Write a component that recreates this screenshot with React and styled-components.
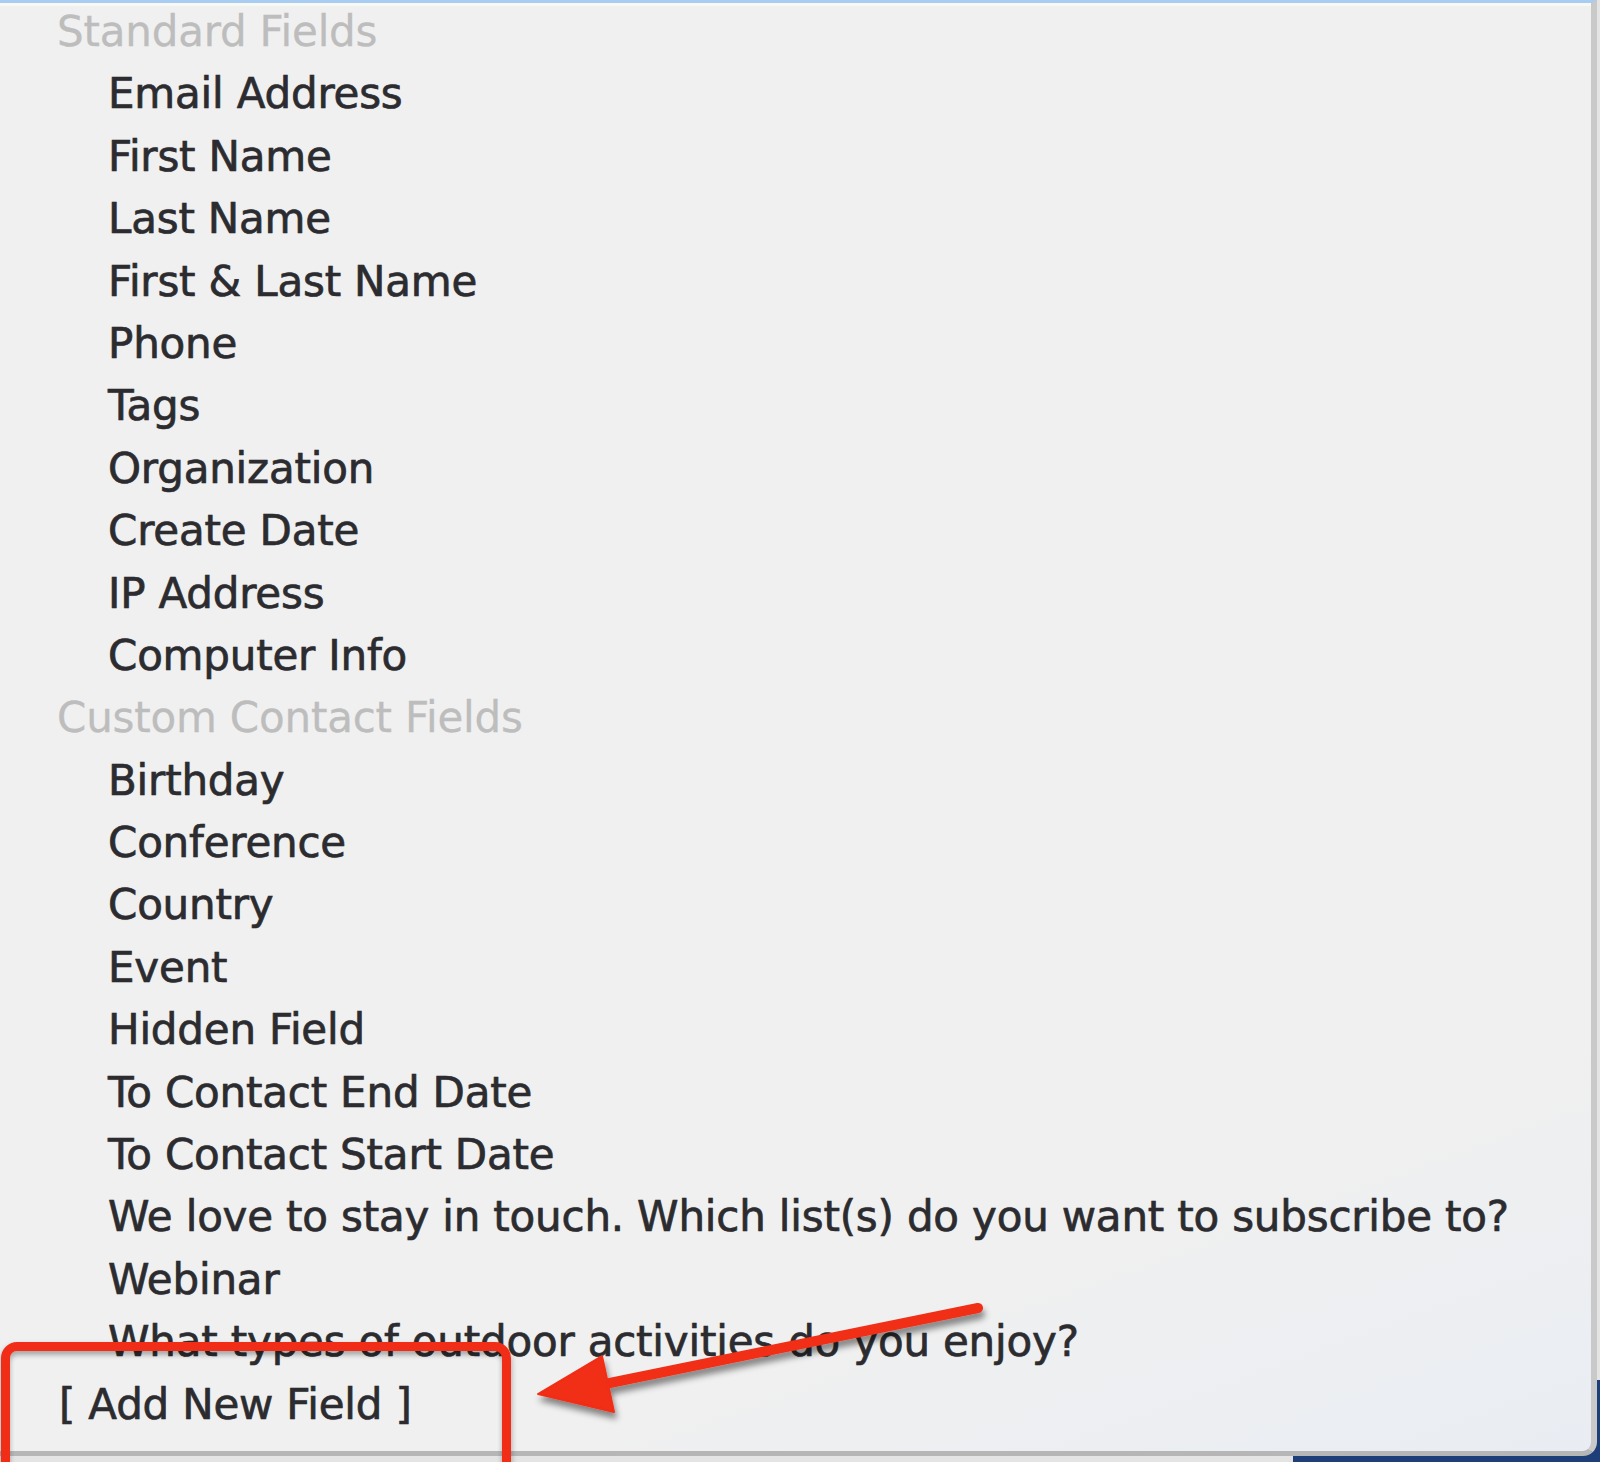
import React from "react";
import styled, { createGlobalStyle } from "styled-components";

const GlobalStyle = createGlobalStyle`
  html, body {
    margin: 0;
    padding: 0;
    background: #e6e6e6;
  }
`;

const Stage = styled.div`
  position: relative;
  width: 1600px;
  height: 1462px;
  overflow: hidden;
  background: #e4e4e4;
`;

// the blue button that sits under the menu, bottom right
const BackButton = styled.div`
  position: absolute;
  left: 1293px;
  top: 1380px;
  width: 340px;
  height: 120px;
  background: #1d3e78;
  border-radius: 10px;
`;

const Menu = styled.div`
  position: relative;
  width: 1597px;
  height: 1456px;
  box-sizing: border-box;
  border-top: 3px solid #a9cdf2;
  border-right: 6px solid #c9c9c9;
  border-bottom: 5px solid #b6b6b6;
  border-bottom-right-radius: 14px;
  background: linear-gradient(160deg, #f0f0f0 0%, #f0f0f0 80%, #e9edf3 100%);
  box-shadow: inset 0 3px 0 #f7faf4;
`;

const List = styled.ul`
  list-style: none;
  margin: -2px 0 0 0;
  padding: 0;
  display: flex;
  flex-direction: column;
  font-family: "DejaVu Sans", "Liberation Sans", sans-serif;
  font-size: 42px;
`;

const Row = styled.li`
  height: 62.4px;
  line-height: 62.4px;
  white-space: nowrap;
  padding-left: ${(p) => (p.$header ? "57px" : p.$action ? "59px" : "108px")};
  color: ${(p) => (p.$header ? "#bdbdbd" : "#2c2c30")};
  -webkit-text-stroke: ${(p) => (p.$header ? "0.3px #bdbdbd" : "0.6px #2c2c30")};
  text-shadow: ${(p) =>
    p.$header ? "none" : "0 0 1px rgba(40, 40, 50, 0.35)"};
  letter-spacing: -0.2px;
`;

const Highlight = styled.div`
  position: absolute;
  left: 1px;
  top: 1342px;
  width: 492px;
  height: 130px;
  border: 9px solid #f12d17;
  border-radius: 16px;
  box-shadow: 0 4px 6px rgba(0, 0, 0, 0.35),
    inset 0 4px 5px rgba(0, 0, 0, 0.3);
`;

const Arrow = styled.svg`
  position: absolute;
  left: 0;
  top: 0;
  width: 1600px;
  height: 1462px;
  pointer-events: none;
`;

const standard = [
  "Email Address",
  "First Name",
  "Last Name",
  "First & Last Name",
  "Phone",
  "Tags",
  "Organization",
  "Create Date",
  "IP Address",
  "Computer Info",
];

const custom = [
  "Birthday",
  "Conference",
  "Country",
  "Event",
  "Hidden Field",
  "To Contact End Date",
  "To Contact Start Date",
  "We love to stay in touch. Which list(s) do you want to subscribe to?",
  "Webinar",
  "What types of outdoor activities do you enjoy?",
];

export default function App() {
  return (
    <Stage>
      <GlobalStyle />
      <BackButton />
      <Menu>
        <List>
          <Row $header>Standard Fields</Row>
          {standard.map((f) => (
            <Row key={f}>{f}</Row>
          ))}
          <Row $header>Custom Contact Fields</Row>
          {custom.map((f) => (
            <Row key={f}>{f}</Row>
          ))}
          <Row $action>[ Add New Field ]</Row>
        </List>
      </Menu>
      <Highlight />
      <Arrow viewBox="0 0 1600 1462">
        <defs>
          <filter id="shadow" x="-10%" y="-50%" width="120%" height="200%">
            <feDropShadow dx="2" dy="6" stdDeviation="3" floodColor="#000" floodOpacity="0.45" />
          </filter>
        </defs>
        <g filter="url(#shadow)" fill="#f12d17" stroke="#f12d17">
          <line x1="978" y1="1308" x2="600" y2="1385" strokeWidth="10" strokeLinecap="round" />
          <polygon points="538,1394 602,1356 614,1412" strokeWidth="2" strokeLinejoin="round" />
        </g>
      </Arrow>
    </Stage>
  );
}
